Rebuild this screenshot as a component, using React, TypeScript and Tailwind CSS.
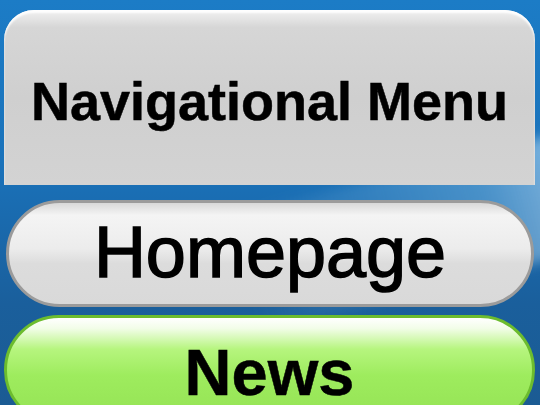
export default function App() {
  return (
    <div className="relative h-[405px] w-[540px] overflow-hidden bg-[linear-gradient(180deg,#1c7cc6_0%,#1a72ba_40%,#1a5f9c_75%,#1b5b93_100%)] font-['Liberation_Sans',Arial,sans-serif]">
      {/* light streaks on the backdrop */}
      <div className="pointer-events-none absolute right-[-60px] top-[170px] h-[120px] w-[360px] rotate-[-14deg] bg-[linear-gradient(90deg,rgba(255,255,255,0)_0%,rgba(160,210,240,0.35)_70%,rgba(220,240,255,0.6)_100%)] blur-[6px]" />

      <div className="relative flex flex-col px-[4px] pt-[10px]">
        <div className="flex h-[175px] w-[531px] items-center justify-center rounded-t-[30px] bg-[linear-gradient(180deg,#f2f2f2_0%,#d6d6d6_10%,#cfcfcf_50%,#d3d3d3_100%)] shadow-[inset_0_3px_2px_rgba(255,255,255,0.9)]">
          <span className="mt-[6px] text-[54px] font-bold leading-none text-black [-webkit-text-stroke:0.5px_black]">
            Navigational Menu
          </span>
        </div>

        <div className="mt-[15px] ml-[2px] flex h-[107px] w-[528px] items-center justify-center rounded-full border-[3px] border-[#9b9b9b] bg-[linear-gradient(180deg,#d8d8d8_0%,#f4f4f4_12%,#ececec_45%,#dcdcdc_60%,#d9d9d9_100%)]">
          <span className="mb-[4px] text-[72px] leading-none text-black [-webkit-text-stroke:1.5px_black]">
            Homepage
          </span>
        </div>

        <div className="mt-[8px] flex h-[110px] w-[531px] items-start justify-center rounded-full border-[3px] border-[#6cbc2e] bg-[linear-gradient(180deg,#ffffff_0%,#f2fde8_10%,#b6f57e_30%,#9eec5e_55%,#94e254_100%)]">
          <span className="mt-[22px] text-[65px] font-bold leading-none text-black [-webkit-text-stroke:0.5px_black]">
            News
          </span>
        </div>
      </div>
    </div>
  );
}
